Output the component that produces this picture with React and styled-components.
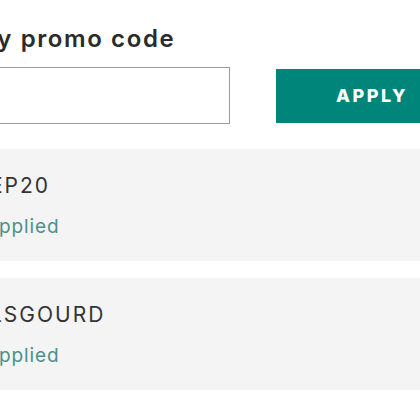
import React from 'react';
import styled, { createGlobalStyle } from 'styled-components';

const GlobalStyle = createGlobalStyle`
  html, body {
    margin: 0;
    padding: 0;
    overflow: hidden;
    background: #ffffff;
  }
  body {
    font-family: Inter, "Open Sans", Arial, sans-serif;
    color: #2b2b2b;
  }
`;

const Panel = styled.section`
  width: 531px;
  margin-left: -63px;
  padding-top: 24px;
`;

const Heading = styled.h2`
  margin: 0 0 13px;
  font-size: 24px;
  line-height: 30px;
  font-weight: 600;
  letter-spacing: 1.6px;
  color: #2b2b2b;
`;

const PromoForm = styled.form`
  display: flex;
  align-items: center;
  gap: 46px;
  margin-bottom: 25px;
`;

const CodeInput = styled.input`
  flex: 1;
  min-width: 0;
  height: 57px;
  box-sizing: border-box;
  border: 1px solid #9b9b9b;
  background: #fff;
  padding: 0 16px;
  font-family: inherit;
  font-size: 18px;
  outline: none;
`;

const ApplyButton = styled.button`
  flex: 0 0 192px;
  height: 54px;
  border: none;
  background: #00857b;
  color: #ffffff;
  font-family: inherit;
  font-size: 18px;
  font-weight: 800;
  letter-spacing: 2.6px;
  cursor: pointer;
`;

const CodeList = styled.ul`
  list-style: none;
  margin: 0;
  padding: 0;
  display: flex;
  flex-direction: column;
  gap: 17px;
`;

const CodeCard = styled.li`
  background: #f4f4f4;
  padding: 23px 40px 22px 48px;
  display: flex;
  flex-direction: column;
  align-items: flex-start;
  gap: 15px;
`;

const CodeName = styled.span`
  margin-left: 5px;
  font-size: 21px;
  line-height: 28px;
  color: #333333;
  letter-spacing: 2px;
`;

const Status = styled.span`
  font-size: 19px;
  line-height: 24px;
  color: #4c8f8b;
  letter-spacing: 0.9px;
`;

const codes = ['EP20', 'LSGOURD'];

export default function App() {
  return (
    <>
      <GlobalStyle />
      <Panel>
        <Heading>Apply promo code</Heading>
        <PromoForm onSubmit={e => e.preventDefault()}>
          <CodeInput type="text" aria-label="Promo code" />
          <ApplyButton type="submit">APPLY</ApplyButton>
        </PromoForm>
        <CodeList>
          {codes.map(code => (
            <CodeCard key={code}>
              <CodeName>{code}</CodeName>
              <Status>Applied</Status>
            </CodeCard>
          ))}
        </CodeList>
      </Panel>
    </>
  );
}
